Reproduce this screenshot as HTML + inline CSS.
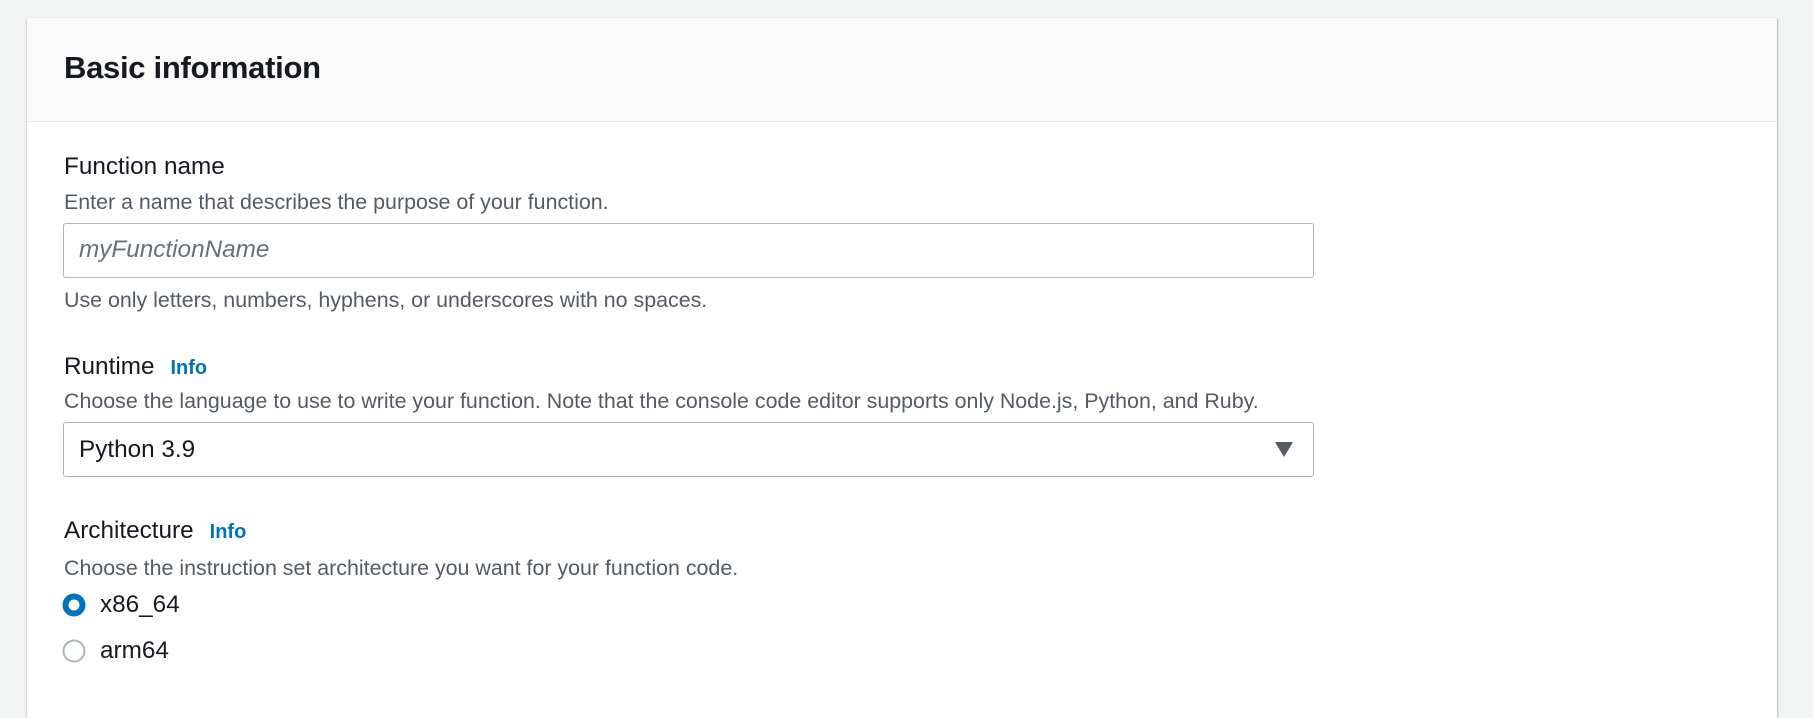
<!DOCTYPE html>
<html><head><style>
body{margin:0;width:1813px;height:685px;background:#f2f3f3;font-family:"Liberation Sans",sans-serif;overflow:hidden;position:relative}
.card{position:absolute;left:27px;top:18px;width:1750px;height:700px;background:#fff;box-shadow:0 1px 2px rgba(0,28,36,.3),1px 1px 1px rgba(0,28,36,.15);}
.hdr{height:103px;background:#fafafa;border-bottom:1px solid #eaeded;}
.t{position:absolute;white-space:nowrap;line-height:1}
h2{position:absolute;left:37px;top:34px;margin:0;font-size:31px;line-height:1;font-weight:bold;color:#16191f;letter-spacing:-0.3px}
.lab{font-size:24.3px;color:#16191f;left:64px}
.desc{font-size:21.4px;color:#545b64;left:64px}
.info{color:#0073bb;font-weight:bold;font-size:20px;margin-left:16px}
.box{position:absolute;left:63px;width:1251px;height:55px;border:1px solid #aab7b8;border-radius:3px;box-sizing:border-box;background:#fff}
</style></head><body>
<div class="card"><div class="hdr"></div>
<h2>Basic information</h2></div>
<div class="t lab" style="top:155px">Function name</div>
<div class="t desc" style="top:192px">Enter a name that describes the purpose of your function.</div>
<div class="box" style="top:223px"><span class="t" style="left:15px;top:14px;font-size:24.3px;font-style:italic;color:#687078">myFunctionName</span></div>
<div class="t desc" style="top:290px">Use only letters, numbers, hyphens, or underscores with no spaces.</div>
<div class="t lab" style="top:355px">Runtime<span class="info">Info</span></div>
<div class="t desc" style="top:391px">Choose the language to use to write your function. Note that the console code editor supports only Node.js, Python, and Ruby.</div>
<div class="box" style="top:422px"><span class="t" style="left:15px;top:15px;font-size:24.3px;color:#16191f">Python 3.9</span>
<svg style="position:absolute;left:1211px;top:19px" width="18" height="15"><polygon points="0,0 18,0 9,15" fill="#545b64"/></svg></div>
<div class="t lab" style="top:519px">Architecture<span class="info">Info</span></div>
<div class="t desc" style="top:558px">Choose the instruction set architecture you want for your function code.</div>
<svg style="position:absolute;left:62px;top:593px" width="24" height="24"><circle cx="12" cy="12" r="8.5" fill="#fff" stroke="#0073bb" stroke-width="6"/></svg>
<div class="t" style="left:100px;top:593px;font-size:24.3px;color:#16191f">x86_64</div>
<svg style="position:absolute;left:62px;top:639px" width="24" height="24"><circle cx="12" cy="12" r="10.5" fill="#fff" stroke="#aab7b8" stroke-width="2"/></svg>
<div class="t" style="left:100px;top:639px;font-size:24.3px;color:#16191f">arm64</div>
</body></html>
